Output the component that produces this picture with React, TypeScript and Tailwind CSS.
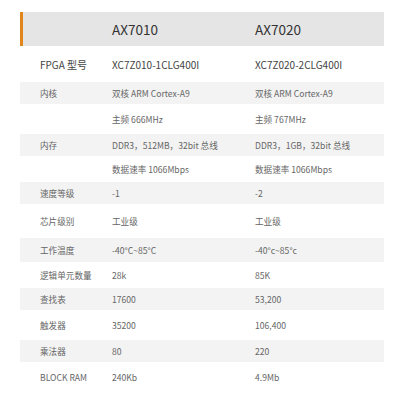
import React from "react";

type Row = { label: string; a: string; b: string; h: string; gray: boolean; big?: boolean };

const rows: Row[] = [
  { label: "FPGA 型号", a: "XC7Z010-1CLG400I", b: "XC7Z020-2CLG400I", h: "h-[36px]", gray: false, big: true },
  { label: "内核", a: "双核 ARM Cortex-A9", b: "双核 ARM Cortex-A9", h: "h-[22px]", gray: true },
  { label: "", a: "主频 666MHz", b: "主频 767MHz", h: "h-[30px]", gray: false },
  { label: "内存", a: "DDR3，512MB，32bit 总线", b: "DDR3，1GB，32bit 总线", h: "h-[22px]", gray: true },
  { label: "", a: "数据速率 1066Mbps", b: "数据速率 1066Mbps", h: "h-[26px]", gray: false },
  { label: "速度等级", a: "-1", b: "-2", h: "h-[22px]", gray: true },
  { label: "芯片级别", a: "工业级", b: "工业级", h: "h-[34px]", gray: false },
  { label: "工作温度", a: "-40°C~85°C", b: "-40°c~85°c", h: "h-[24px]", gray: true },
  { label: "逻辑单元数量", a: "28k", b: "85K", h: "h-[26px]", gray: false },
  { label: "查找表", a: "17600", b: "53,200", h: "h-[22px]", gray: true },
  { label: "触发器", a: "35200", b: "106,400", h: "h-[30px]", gray: false },
  { label: "乘法器", a: "80", b: "220", h: "h-[22px]", gray: true },
  { label: "BLOCK RAM", a: "240Kb", b: "4.9Mb", h: "h-[30px]", gray: false },
];

export default function App() {
  return (
    <div
      className="w-[400px] h-[400px] bg-white pt-[12px] pl-[20px] pr-[16px]"
      style={{ fontFamily: '"Noto Sans CJK SC", "Noto Sans", sans-serif' }}
    >
      <div className="flex flex-col">
        <div className="h-[34px] overflow-hidden flex items-center bg-[linear-gradient(to_right,#e0861c_3px,#e5e5e5_3px)] text-[13.5px] text-[#333]">
          <div className="w-[92px] shrink-0" />
          <div className="w-[143px] shrink-0">AX7010</div>
          <div className="flex-1">AX7020</div>
        </div>
        {rows.map((r, i) => (
          <div
            key={i}
            className={`${r.h} flex items-center ${r.gray ? "bg-[#f3f3f3]" : "bg-white"} ${
              r.big ? "text-[10px] text-[#444]" : "text-[8.6px] text-[#666]"
            }`}
          >
            <div className="w-[92px] shrink-0 pl-[20px] whitespace-nowrap">{r.label}</div>
            <div className="w-[143px] shrink-0 whitespace-nowrap">{r.a}</div>
            <div className="flex-1 whitespace-nowrap">{r.b}</div>
          </div>
        ))}
      </div>
    </div>
  );
}
